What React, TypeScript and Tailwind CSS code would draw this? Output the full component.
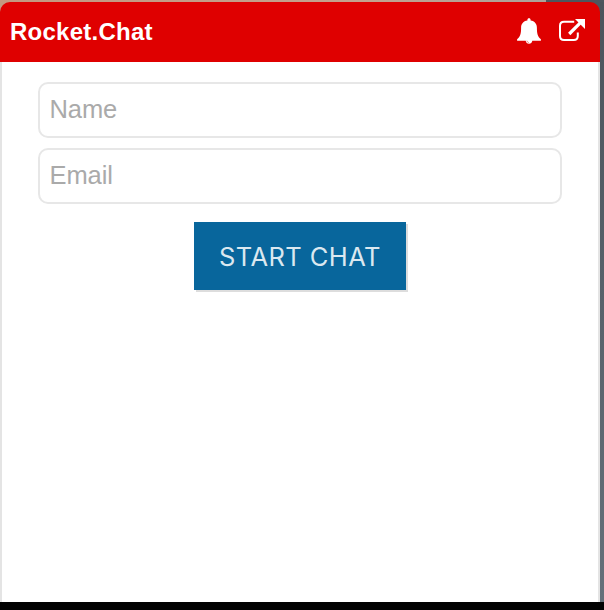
import React from "react";

function BellIcon() {
  return (
    <svg className="h-[26px] w-6" viewBox="0 0 24 26" fill="white" aria-label="Notifications">
      <path d="M12 0.3c-1 0-1.6.7-1.6 1.6v.7C6.3 3.2 4.1 6 4.1 9.8c0 5.9-.8 9-4 11.5v1.4h8.6c.3 1.9 1.5 3 3.3 3s3-1.1 3.3-3h8.6v-1.4c-3.2-2.5-4-5.6-4-11.5 0-3.8-2.2-6.6-6.3-7.2v-.7c0-.9-.6-1.6-1.6-1.6Z" />
      <path d="M9.9 22.7c.2 1.1.9 1.7 2 1.8" fill="none" stroke="#df0000" strokeWidth="0.5" />
    </svg>
  );
}

function PopoutIcon() {
  return (
    <svg className="h-6 w-[26px]" viewBox="0 0 26 24" fill="none" aria-label="Open in new window">
      <path
        d="M15.2 2.7H5C2.4 2.7 1 4.2 1 6.7V17c0 2.5 1.4 4 4 4h9.8c2.6 0 4-1.5 4-4v-3.5"
        stroke="white"
        strokeWidth="2"
      />
      <path d="M10.2 15 21.5 3.7" stroke="white" strokeWidth="3.2" />
      <path d="M16 0H26V10Z" fill="white" />
    </svg>
  );
}

function Field({ label, type }: { label: string; type: string }) {
  return (
    <input
      type={type}
      placeholder={label}
      className="block h-14 w-full rounded-[10px] border-2 border-[#e7e7e7] bg-white px-[9.5px] pb-[1px] text-[25.5px] tracking-[-0.1px] placeholder:text-[#aaaaaa] outline-none"
    />
  );
}

export default function App() {
  return (
    <div className="h-[610px] w-[604px] overflow-hidden bg-[linear-gradient(90deg,#c49880_0,#c4a28e_360px,#aaa39b_546px,#4d565e_546px)] pt-[2px] font-['Liberation_Sans',Arial,sans-serif]">
      <div className="flex h-[600px] bg-[linear-gradient(90deg,transparent_600px,#4d565e_600px)]">
        <div className="flex w-[600px] flex-col">
          <header className="flex h-[60px] shrink-0 items-center justify-between rounded-t-[10px] bg-[#df0000] pr-[15px] pb-[2px] pl-[10px]">
            <h1 className="pt-[2px] text-[24px] leading-[58px] font-bold tracking-[0.25px] text-white">Rocket.Chat</h1>
            <div className="flex items-center gap-[18px]">
              <BellIcon />
              <PopoutIcon />
            </div>
          </header>
          <main className="flex flex-1 flex-col items-center border-x-2 border-[#e4e4e4] bg-white px-9 pt-5">
            <form className="flex w-full flex-col items-center" onSubmit={(e) => e.preventDefault()}>
              <div className="flex w-full flex-col gap-[10px]">
                <Field label="Name" type="text" />
                <Field label="Email" type="email" />
              </div>
              <button className="mt-[18px] h-[68px] w-[212px] bg-[#08669c] pt-[3px] font-['Inter',sans-serif] text-[25.5px] tracking-[0.4px] whitespace-nowrap text-[#dbe8f0] shadow-[2px_2px_0_#dddddd] [font-optical-sizing:none]">
                START CHAT
              </button>
            </form>
          </main>
        </div>
        <div className="w-1 bg-linear-to-b from-[#4b545c] to-[#65707a]" />
      </div>
      <div className="h-2 bg-[#020202]" />
    </div>
  );
}
